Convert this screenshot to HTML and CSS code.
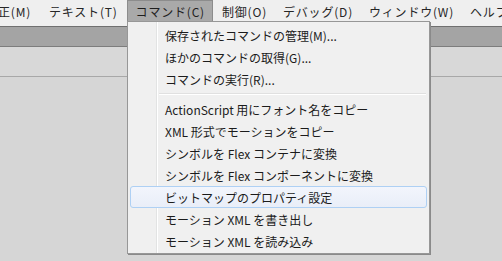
FILE: index.html
```html
<!DOCTYPE html>
<html lang="ja">
<head>
    <meta charset="UTF-8">
    <title>コマンド メニュー</title>
    <link rel="stylesheet" href="styles.css">
</head>
<body>
    <div class="menubar">
        <span class="menu-title first">正(M)</span>
        <span class="menu-title">テキスト(T)</span>
        <span class="menu-title open">コマンド(C)</span>
        <span class="menu-title">制御(O)</span>
        <span class="menu-title">デバッグ(D)</span>
        <span class="menu-title">ウィンドウ(W)</span>
        <span class="menu-title">ヘルプ</span>
    </div>
    <div class="toolbar"></div>
    <div class="panel"></div>
    <div class="workspace"></div>

    <!-- dropdown for コマンド(C) -->
    <div class="dropdown">
        <div class="item">保存されたコマンドの管理(M)...</div>
        <div class="item">ほかのコマンドの取得(G)...</div>
        <div class="item">コマンドの実行(R)...</div>
        <div class="separator"></div>
        <div class="item">ActionScript 用にフォント名をコピー</div>
        <div class="item">XML 形式でモーションをコピー</div>
        <div class="item">シンボルを Flex コンテナに変換</div>
        <div class="item">シンボルを Flex コンポーネントに変換</div>
        <div class="item hover">ビットマップのプロパティ設定</div>
        <div class="item">モーション XML を書き出し</div>
        <div class="item">モーション XML を読み込み</div>
    </div>
</body>
</html>
```

FILE: styles.css
```css
body {
    margin: 0;
    padding: 0;
    font-family: "Noto Sans CJK JP", "Noto Sans", sans-serif;
    font-size: 12px;
    background-color: #d6d6d6;
    width: 502px;
    height: 261px;
    overflow: hidden;
    position: relative;
}
.menubar {
    height: 26px;
    background-color: #efefef;
    border-bottom: 1px solid #6f6f6f;
    display: flex;
    align-items: flex-start;
    white-space: nowrap;
    letter-spacing: 0.8px;
}
.menu-title {
    height: 20px;
    line-height: 22px;
    padding: 0 7px 0 8px;
    margin-right: 1px;
    color: #262626;
    border: 1px solid transparent;
    border-bottom: none;
}
.menu-title.first {
    margin-left: -11px;
}
.menu-title.open {
    background-color: #a9a9a9;
    border-color: #8c8c8c;
    color: #1f1f1f;
}
.open ~ .menu-title {
    padding: 0 6px 0 7px;
}
.toolbar {
    height: 19px;
    background-color: #a4a4a4;
    border-bottom: 1px solid #7d7d7d;
}
.panel {
    height: 29px;
    background-color: #d8d8d8;
    border-bottom: 1px solid #a8a8a8;
}
.workspace {
    height: 184px;
}
.dropdown {
    position: absolute;
    left: 127px;
    top: 21px;
    width: 299px;
    padding: 2px 1px 1px 1px;
    background-color: #f0f0f0;
    border: 1px solid #979797;
    box-shadow: 1px 1px 0 #8a8a8a;
    background-image: linear-gradient(to right, transparent 28px, #e2e3e3 28px, #e2e3e3 29px, #ffffff 29px, #ffffff 30px, transparent 30px);
}
.item {
    height: 22px;
    line-height: 22px;
    padding-left: 34px;
    color: #1b1b1b;
    white-space: nowrap;
    border: 1px solid transparent;
    margin: 0 1px 0 1px;
    box-sizing: border-box;
    border-radius: 3px;
}
.item.hover {
    background: linear-gradient(to bottom, #f2f5fc, #e9eef8);
    border-color: #aed0f4;
}
.separator {
    margin: 3px 2px 3px 30px;
    border-top: 1px solid #e0e0e0;
    background-color: #ffffff;
    height: 1px;
}
```
